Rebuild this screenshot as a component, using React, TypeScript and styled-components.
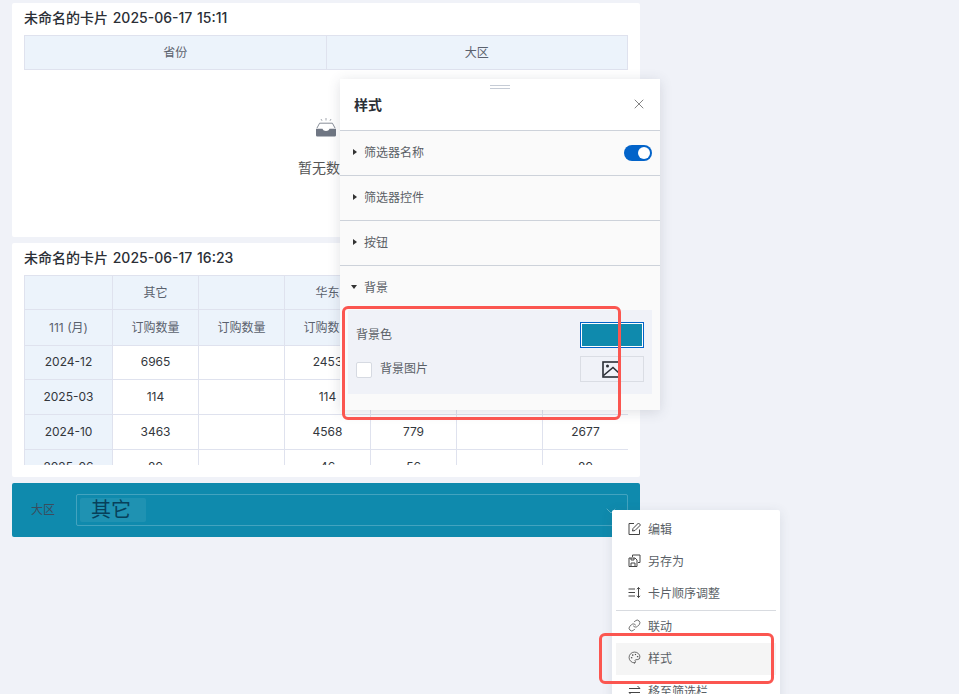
import React from "react";
import styled, { createGlobalStyle } from "styled-components";
import { X, Link, Palette, ChevronDown } from "lucide-react";

const Global = createGlobalStyle`
  html, body { margin: 0; padding: 0; height: 100%; overflow: hidden; background: #f0f2f8; }
  #root { height: 100%; }
  * { box-sizing: border-box; }
`;

const Page = styled.div`
  position: relative;
  width: 959px;
  height: 694px;
  overflow: hidden;
  padding: 3px 0 0 12px;
  font-family: Inter, "Noto Sans CJK SC", sans-serif;
  color: #333;
`;

const Column = styled.div`
  width: 628px;
  display: flex;
  flex-direction: column;
  gap: 6px;
`;

const Card = styled.section`
  height: 234px;
  background: #fff;
  border-radius: 2px;
  padding: 6px 12px 0;
`;

const CardTitle = styled.h2`
  margin: 0 0 9px;
  height: 17px;
  line-height: 17px;
  font-size: 14px;
  font-weight: 500;
  word-spacing: 1px;
  color: #2b2f36;
  white-space: nowrap;
`;

const TableClip = styled.div`
  height: 190px;
  overflow: hidden;
`;

const Table = styled.table`
  width: 604px;
  border-collapse: collapse;
  table-layout: fixed;
  font-size: 12px;
  text-align: center;
`;

const Cell = styled.td<{ $head?: boolean; $h?: number }>`
  height: ${(p) => p.$h ?? 35}px;
  padding: 0 0 2px;
  border: 1px solid #dfe2ee;
  background: ${(p) => (p.$head ? "#ecf3fb" : "#fff")};
  color: ${(p) => (p.$head ? "#5a616d" : "#33373d")};
`;

const Empty = styled.div`
  display: flex;
  flex-direction: column;
  align-items: center;
  padding-top: 48px;
  gap: 20px;
  font-size: 14px;
  color: #555;
`;

const FilterBar = styled.section`
  height: 54px;
  background: #0f8aad;
  border-radius: 2px;
  display: flex;
  align-items: center;
  padding: 0 12px 0 19px;
  gap: 21px;
`;

const FilterLabel = styled.span`
  font-size: 12px;
  margin-top: -3px;
  color: #3a4d5e;
  white-space: nowrap;
`;

const FilterInput = styled.div`
  position: relative;
  flex: 1;
  height: 32px;
  border: 1px solid rgba(255, 255, 255, 0.22);
  border-radius: 2px;
  display: flex;
  align-items: center;
  padding-left: 3px;
`;

const Tag = styled.span`
  width: 66px;
  height: 24px;
  line-height: 24px;
  padding-left: 11px;
  background: rgba(255, 255, 255, 0.07);
  border-radius: 2px;
  font-size: 20px;
  color: #07405a;
`;

const Chevron = styled.span`
  position: absolute;
  right: 8px;
  top: 8px;
  display: flex;
  color: rgba(255, 255, 255, 0.45);
`;

const Panel = styled.aside`
  position: absolute;
  left: 340px;
  top: 79px;
  width: 320px;
  height: 331px;
  background: #fafafa;
  box-shadow: 0 2px 12px rgba(60, 70, 90, 0.16);
  display: flex;
  flex-direction: column;
`;

const PanelHead = styled.header`
  position: relative;
  height: 52px;
  flex: none;
  background: #fff;
  border-bottom: 1px solid #cdd2da;
  display: flex;
  align-items: center;
  justify-content: space-between;
  padding: 0 13px 2px 14px;
  font-size: 14px;
  font-weight: 600;
  color: #2b2f36;
`;

const Handle = styled.span`
  position: absolute;
  left: 150px;
  top: 6px;
  width: 20px;
  height: 4px;
  border-top: 1px solid #c6ccd6;
  border-bottom: 1px solid #c6ccd6;
`;

const Row = styled.div<{ $last?: boolean }>`
  height: 45px;
  flex: none;
  display: flex;
  align-items: center;
  padding: 0 8px ${(p) => (p.$last ? 4 : 3)}px 13px;
  gap: 7px;
  font-size: 12px;
  color: #5a5f66;
  border-bottom: ${(p) => (p.$last ? "none" : "1px solid #cdd2da")};
`;

const Caret = styled.span<{ $open?: boolean }>`
  width: 0;
  height: 0;
  flex: none;
  ${(p) =>
    p.$open
      ? "border-left: 3px solid transparent; border-right: 3px solid transparent; border-top: 4px solid #333; margin-left: -2px;"
      : "border-top: 3px solid transparent; border-bottom: 3px solid transparent; border-left: 4px solid #333;"}
`;

const Toggle = styled.span`
  margin-left: auto;
  margin-top: 3px;
  width: 28px;
  height: 16px;
  border-radius: 8px;
  background: #0263c9;
  display: flex;
  justify-content: flex-end;
  align-items: center;
  padding-right: 2px;
`;

const Knob = styled.span`
  width: 12px;
  height: 12px;
  border-radius: 50%;
  background: #fff;
`;

const BgBox = styled.div`
  margin: -1px 8px 0;
  height: 84px;
  background: #f0f2f8;
  padding: 12px 8px 0;
  display: flex;
  flex-direction: column;
  gap: 8px;
  font-size: 12px;
  color: #5a5f66;
`;

const BgRow = styled.div`
  height: 26px;
  display: flex;
  align-items: center;
  justify-content: space-between;
`;

const BgText = styled.span`
  margin-top: -3px;
`;

const CheckLabel = styled.label`
  display: flex;
  align-items: center;
  gap: 8px;
`;

const Check = styled.span`
  width: 16px;
  height: 16px;
  margin-top: 1px;
  background: #fff;
  border: 1px solid #d6dae2;
  border-radius: 2px;
`;

const Swatch = styled.span`
  width: 64px;
  height: 26px;
  background: #0f8aad;
  border: 1px solid #0263c9;
  box-shadow: inset 0 0 0 1px #fff;
`;

const ImageButton = styled.span`
  width: 64px;
  height: 26px;
  border: 1px solid #dadde4;
  display: flex;
  align-items: center;
  justify-content: center;
  color: #2b2f36;
`;

const Menu = styled.nav`
  position: absolute;
  left: 612px;
  top: 510px;
  width: 168px;
  height: 200px;
  background: #fff;
  border-radius: 2px;
  padding: 3px 4px;
  box-shadow: 0 2px 12px rgba(60, 70, 90, 0.12);
`;

const MenuItem = styled.div<{ $active?: boolean; $lift?: boolean }>`
  height: 32px;
  display: flex;
  align-items: center;
  gap: 7px;
  padding: 0 0 ${(p) => (p.$lift ? 4 : 2)}px 12px;
  font-size: 12px;
  color: #5a5f66;
  background: ${(p) => (p.$active ? "#f5f5f5" : "transparent")};
`;

const MenuDivider = styled.div`
  height: 1px;
  margin-top: 1px;
  background: #d8dbe0;
`;

const Callout = styled.div<{ $x: number; $y: number; $w: number; $h: number }>`
  position: absolute;
  left: ${(p) => p.$x}px;
  top: ${(p) => p.$y}px;
  width: ${(p) => p.$w}px;
  height: ${(p) => p.$h}px;
  border: 3px solid #fb5650;
  border-radius: 6px;
  pointer-events: none;
`;

const EmptyIcon = () => (
  <svg width="22" height="19" viewBox="0 0 22 19" fill="none">
    <path d="M11 0v2.5M6 1l1 1.8M16 1l-1 1.8" stroke="#8a909b" strokeWidth="0.8" />
    <path d="M2 10l2.6-4.8h12.8L20 10" stroke="#7b818d" strokeWidth="0.9" />
    <path d="M1 10.8h6.5c.5 1.6 1.8 2.2 3.5 2.2s3-.6 3.5-2.2H21v6.5a1.3 1.3 0 0 1-1.3 1.3H2.3A1.3 1.3 0 0 1 1 17.3z" fill="#6f7683" />
  </svg>
);

const PictureIcon = () => (
  <svg width="20" height="17" viewBox="0 0 20 17" fill="none" stroke="#2b2f36" strokeWidth="1.6">
    <rect x="1" y="1" width="17" height="15" />
    <circle cx="5.5" cy="5" r="1.5" fill="#2b2f36" stroke="none" />
    <path d="M1.5 14.5l9.5-8 6.5 6" />
  </svg>
);

const EditIcon = () => (
  <svg width="13" height="13" viewBox="0 0 13 13" fill="none" stroke="#444" strokeWidth="1">
    <path d="M6 1.5H1v11h10.5V7.5" />
    <path d="M4.5 9l.5-2.5L10.5 1l2 2L7 8.5z" />
  </svg>
);

const SaveAsIcon = () => (
  <svg width="13" height="13" viewBox="0 0 13 13" fill="none" stroke="#444" strokeWidth="1">
    <path d="M4.5 3V1h7.5v7.5H10" />
    <path d="M1 4h6l2 2v6.5H1z" />
    <path d="M3 12.5V9h4v3.5M3 4v2h3V4" />
  </svg>
);

const OrderIcon = () => (
  <svg width="13" height="13" viewBox="0 0 13 13" fill="none" stroke="#444" strokeWidth="1">
    <path d="M0.5 3h6.5M0.5 6.5h6.5M0.5 10h6.5" />
    <path d="M10.5 1.5v10" />
    <path d="M9 3.2l1.5-1.7L12 3.2M9 9.8l1.5 1.7L12 9.8" />
  </svg>
);

const SwapIcon = () => (
  <svg width="13" height="13" viewBox="0 0 13 13" fill="none" stroke="#444" strokeWidth="1">
    <path d="M1 4.5h11L9.5 2M12 8.5H1L3.5 11" />
  </svg>
);

const months = [
  ["2024-12", "6965", "", "2453", "", "", ""],
  ["2025-03", "114", "", "114", "", "", ""],
  ["2024-10", "3463", "", "4568", "779", "", "2677"],
  ["2025-06", "89", "", "46", "56", "", "89"],
];

export default function App() {
  return (
    <Page>
      <Global />
      <Column>
        <Card>
          <CardTitle>未命名的卡片 2025-06-17 15:11</CardTitle>
          <Table>
            <tbody>
              <tr>
                <Cell as="th" $head $h={34} style={{ fontWeight: 400 }}>省份</Cell>
                <Cell as="th" $head $h={34} style={{ fontWeight: 400 }}>大区</Cell>
              </tr>
            </tbody>
          </Table>
          <Empty>
            <EmptyIcon />
            <span>暂无数据</span>
          </Empty>
        </Card>
        <Card>
          <CardTitle>未命名的卡片 2025-06-17 16:23</CardTitle>
          <TableClip>
            <Table>
              <colgroup>
                <col style={{ width: 88 }} />
                <col span={6} style={{ width: 86 }} />
              </colgroup>
              <tbody>
                <tr>
                  <Cell $head $h={34} />
                  <Cell $head $h={34}>其它</Cell>
                  <Cell $head $h={34} />
                  <Cell $head $h={34}>华东</Cell>
                  <Cell $head $h={34} />
                  <Cell $head $h={34} />
                  <Cell $head $h={34} />
                </tr>
                <tr>
                  <Cell $head $h={36}>111 (月)</Cell>
                  {[0, 1, 2, 3, 4, 5].map((i) => (
                    <Cell key={i} $head $h={36}>订购数量</Cell>
                  ))}
                </tr>
                {months.map((r, n) => (
                  <tr key={r[0]}>
                    {r.map((v, i) => (
                      <Cell key={i} $head={i === 0} $h={n === 0 ? 34 : 35} style={i === 0 ? { color: "#33373d" } : undefined}>{v}</Cell>
                    ))}
                  </tr>
                ))}
              </tbody>
            </Table>
          </TableClip>
        </Card>
        <FilterBar>
          <FilterLabel>大区</FilterLabel>
          <FilterInput>
            <Tag>其它</Tag>
            <Chevron><ChevronDown size={16} strokeWidth={1} /></Chevron>
          </FilterInput>
        </FilterBar>
      </Column>

      <Panel>
        <PanelHead>
          <Handle />
          样式
          <X size={16} strokeWidth={1} color="#444" />
        </PanelHead>
        <Row>
          <Caret />筛选器名称
          <Toggle><Knob /></Toggle>
        </Row>
        <Row><Caret />筛选器控件</Row>
        <Row><Caret />按钮</Row>
        <Row $last><Caret $open />背景</Row>
        <BgBox>
          <BgRow>
            <BgText>背景色</BgText>
            <Swatch />
          </BgRow>
          <BgRow>
            <CheckLabel><Check /><BgText>背景图片</BgText></CheckLabel>
            <ImageButton><PictureIcon /></ImageButton>
          </BgRow>
        </BgBox>
      </Panel>

      <Menu>
        <MenuItem><EditIcon />编辑</MenuItem>
        <MenuItem><SaveAsIcon />另存为</MenuItem>
        <MenuItem><OrderIcon />卡片顺序调整</MenuItem>
        <MenuDivider />
        <MenuItem $lift><Link size={13} strokeWidth={1.4} color="#444" />联动</MenuItem>
        <MenuItem $lift $active><Palette size={13} strokeWidth={1.4} color="#444" />样式</MenuItem>
        <MenuItem><SwapIcon />移至筛选栏</MenuItem>
      </Menu>

      <Callout $x={342} $y={306} $w={279} $h={114} />
      <Callout $x={599} $y={633} $w={175} $h={51} />
    </Page>
  );
}
